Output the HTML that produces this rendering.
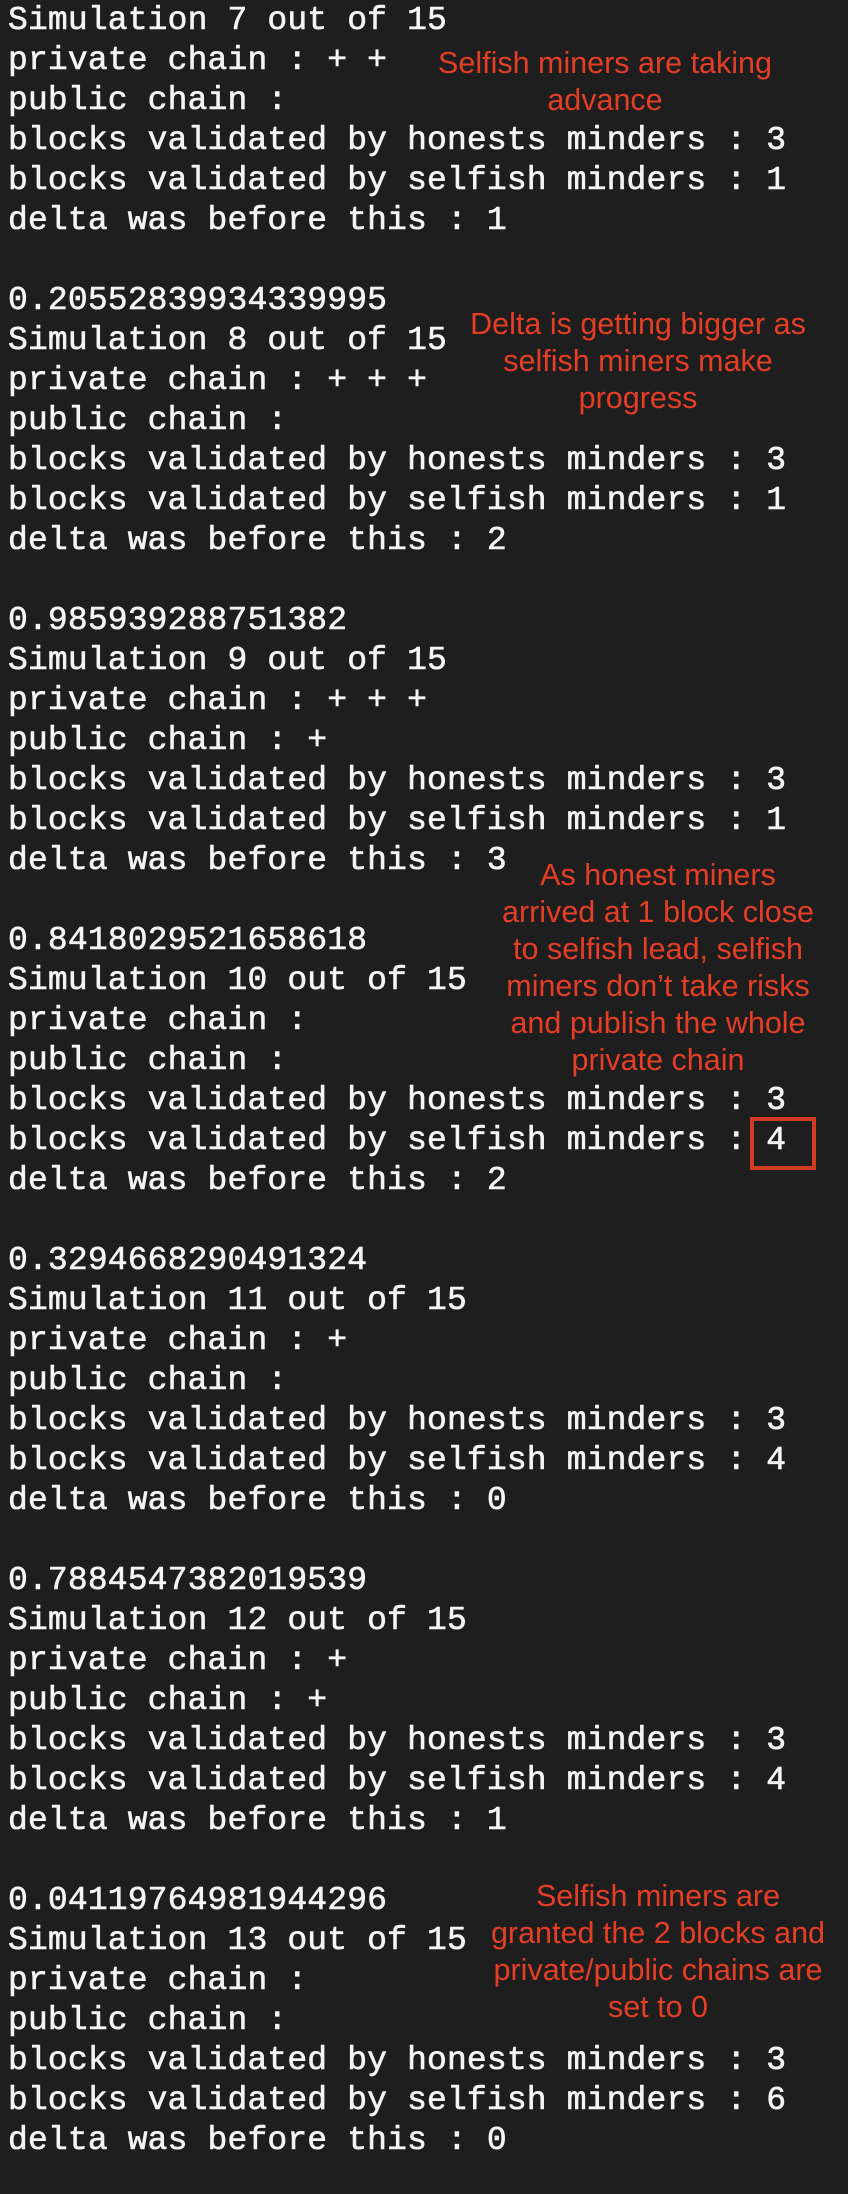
<!DOCTYPE html>
<html><head><meta charset="utf-8"><style>
html,body{margin:0;padding:0}
body{width:848px;height:2194px;background:#1e1e1e;position:relative;overflow:hidden}
pre{position:absolute;left:8px;top:1px;margin:0;font-family:"Liberation Mono",monospace;font-size:33px;line-height:40px;color:#f4f4f4;letter-spacing:0.15px;-webkit-text-stroke:0.6px #f4f4f4}
.a{position:absolute;width:420px;text-align:center;font-family:"Liberation Sans",sans-serif;font-size:30.5px;line-height:37px;color:#e53e26}
.box{position:absolute;left:750px;top:1117px;width:58px;height:45px;border:4px solid #d23b22}
</style></head><body>
<pre>Simulation 7 out of 15
private chain : + +
public chain :
blocks validated by honests minders : 3
blocks validated by selfish minders : 1
delta was before this : 1

0.20552839934339995
Simulation 8 out of 15
private chain : + + +
public chain :
blocks validated by honests minders : 3
blocks validated by selfish minders : 1
delta was before this : 2

0.985939288751382
Simulation 9 out of 15
private chain : + + +
public chain : +
blocks validated by honests minders : 3
blocks validated by selfish minders : 1
delta was before this : 3

0.8418029521658618
Simulation 10 out of 15
private chain :
public chain :
blocks validated by honests minders : 3
blocks validated by selfish minders : 4
delta was before this : 2

0.3294668290491324
Simulation 11 out of 15
private chain : +
public chain :
blocks validated by honests minders : 3
blocks validated by selfish minders : 4
delta was before this : 0

0.7884547382019539
Simulation 12 out of 15
private chain : +
public chain : +
blocks validated by honests minders : 3
blocks validated by selfish minders : 4
delta was before this : 1

0.04119764981944296
Simulation 13 out of 15
private chain :
public chain :
blocks validated by honests minders : 3
blocks validated by selfish minders : 6
delta was before this : 0</pre>
<div class="a" style="left:395px;top:45px">Selfish miners are taking<br>advance</div>
<div class="a" style="left:428px;top:306px">Delta is getting bigger as<br>selfish miners make<br>progress</div>
<div class="a" style="left:448px;top:857px">As honest miners<br>arrived at 1 block close<br>to selfish lead, selfish<br>miners don’t take risks<br>and publish the whole<br>private chain</div>
<div class="a" style="left:448px;top:1878px">Selfish miners are<br>granted the 2 blocks and<br>private/public chains are<br>set to 0</div>
<div class="box"></div>
</body></html>
